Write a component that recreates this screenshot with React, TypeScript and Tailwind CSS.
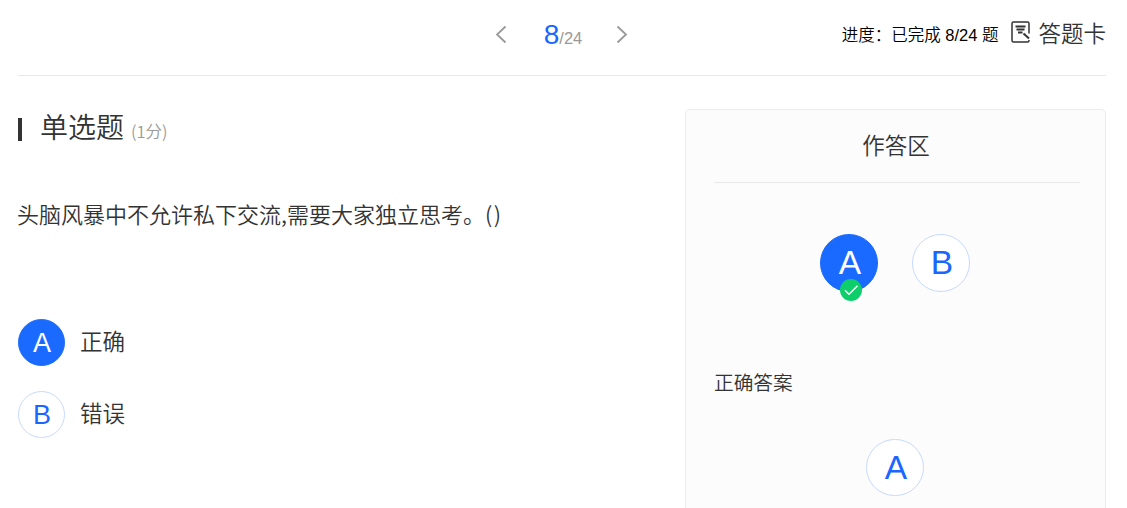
import React from "react";

const options = [
  { key: "A", label: "正确", selected: true },
  { key: "B", label: "错误", selected: false },
];

export default function App() {
  return (
    <div className="h-[508px] overflow-hidden bg-white pl-[18px] pr-[21px] text-[#333] font-['Liberation_Sans','Noto_Sans_CJK_SC',sans-serif] font-[350]">
      <Header />
      <main className="flex items-start justify-between pt-[33px]">
        <section>
          <div className="flex h-9 items-center">
            <span className="mt-1 h-[23px] w-1 bg-[#333]" />
            <h1 className="mt-1 ml-[18px] text-[28px] leading-9 whitespace-nowrap">单选题</h1>
            <span className="mt-2 ml-[7px] text-[16.5px] leading-6 text-[#999] font-['Noto_Sans_CJK_SC',sans-serif]">(1分)</span>
          </div>
          <p className="mt-[52px] -ml-px text-[22px] leading-8 whitespace-nowrap font-['Noto_Sans_CJK_SC',sans-serif]">
            头脑风暴中不允许私下交流,需要大家独立思考。<span className="tracking-[1.5px]">()</span>
          </p>
          <ul className="mt-[90px] space-y-[25px]">
            {options.map((option) => (
              <li key={option.key} className="flex items-center gap-[15px]">
                <Circle selected={option.selected} className="size-[47px] pt-px pl-px text-[27px]">
                  {option.key}
                </Circle>
                <span className="pt-px text-[22.5px] leading-8">{option.label}</span>
              </li>
            ))}
          </ul>
        </section>

        {/* Answer panel */}
        <aside className="h-[440px] w-[421px] rounded-[5px] border border-[#ececec] bg-[#fcfcfc] pr-[25px] pl-7">
          <h2 className="h-[73px] border-b border-[#e8e8e8] pr-0.5 text-center text-[22.5px] leading-[73px]">作答区</h2>
          <div className="mt-[51px] flex justify-center gap-[34px] pr-[5px]">
            {options.map((option) => (
              <div key={option.key} className="relative">
                <Circle selected={option.selected} className="size-[58px] pl-[3px] text-[33.5px]">
                  {option.key}
                </Circle>
                {option.selected && <CheckBadge />}
              </div>
            ))}
          </div>
          <h3 className="mt-[75px] text-[19.7px] leading-8">正确答案</h3>
          <div className="mt-10 flex justify-center pr-[5px]">
            <Circle className="h-[57px] w-[58px] pl-[3px] text-[33.5px]">A</Circle>
          </div>
        </aside>
      </main>
    </div>
  );
}

const Header = () => (
  <header className="grid h-[76px] grid-cols-[1fr_auto_1fr] items-start border-b border-[#e8e8e8]">
    <div />
    <nav className="flex h-[69px] items-center">
      <Chevron d="M9.5 1.5 1 9.5 9.5 17.5" />
      <div className="mr-[34px] ml-9 flex items-baseline text-[#999]">
        <span className="text-[28px] leading-8 text-[#1a66ff]">8</span>
        <span className="text-[16.5px]">/24</span>
      </div>
      <Chevron d="M1.5 1.5 10 9.5 1.5 17.5" />
    </nav>
    <div className="flex h-[70px] items-center justify-end whitespace-nowrap">
      <span className="text-[16.5px] text-black">进度：已完成 8/24 题</span>
      <CardIcon />
      <span className="ml-[7px] text-[22.5px] leading-8">答题卡</span>
    </div>
  </header>
);

const Circle = ({ selected, className, children }: { selected?: boolean, className: string, children: React.ReactNode }) => (
  <div
    className={`flex items-center justify-center rounded-full border leading-none ${
      selected ? "border-[#1a6aff] bg-[#1a6aff] text-white" : "border-[#c8d9ff] bg-white text-[#1a66ff]"
    } ${className}`}
  >
    {children}
  </div>
);

const CheckBadge = () => (
  <svg className="absolute top-[45px] left-5 size-[22px]" viewBox="0 0 22 22" fill="none">
    <circle cx="11" cy="11" r="11" fill="#0dce6b" />
    <path d="m5 11.2 4 4 8.5-8.5" stroke="#fff" strokeWidth="1.5" />
  </svg>
);

const Chevron = ({ d }: { d: string }) => (
  <svg className="h-[19px] w-3" viewBox="0 0 12 19" fill="none" stroke="#999" strokeWidth="1.8">
    <path d={d} />
  </svg>
);

const CardIcon = () => (
  <svg className="mb-1.5 ml-[13px] h-[22px] w-5" viewBox="0 0 20 22" fill="none" stroke="#333" strokeWidth="1.5">
    <path d="M18 12.5v-10A1.5 1.5 0 0 0 16.5 1h-14A1.5 1.5 0 0 0 1 2.5v17A1.5 1.5 0 0 0 2.5 21h14a1.5 1.5 0 0 0 1.5-1.5V19" />
    <path d="M4.5 5.500h10M5.500 8.500h8M7 11.500h4.500" strokeWidth="1.800" />
    <path d="m12.500 12.500 5.500 5" strokeWidth="2" />
  </svg>
);
